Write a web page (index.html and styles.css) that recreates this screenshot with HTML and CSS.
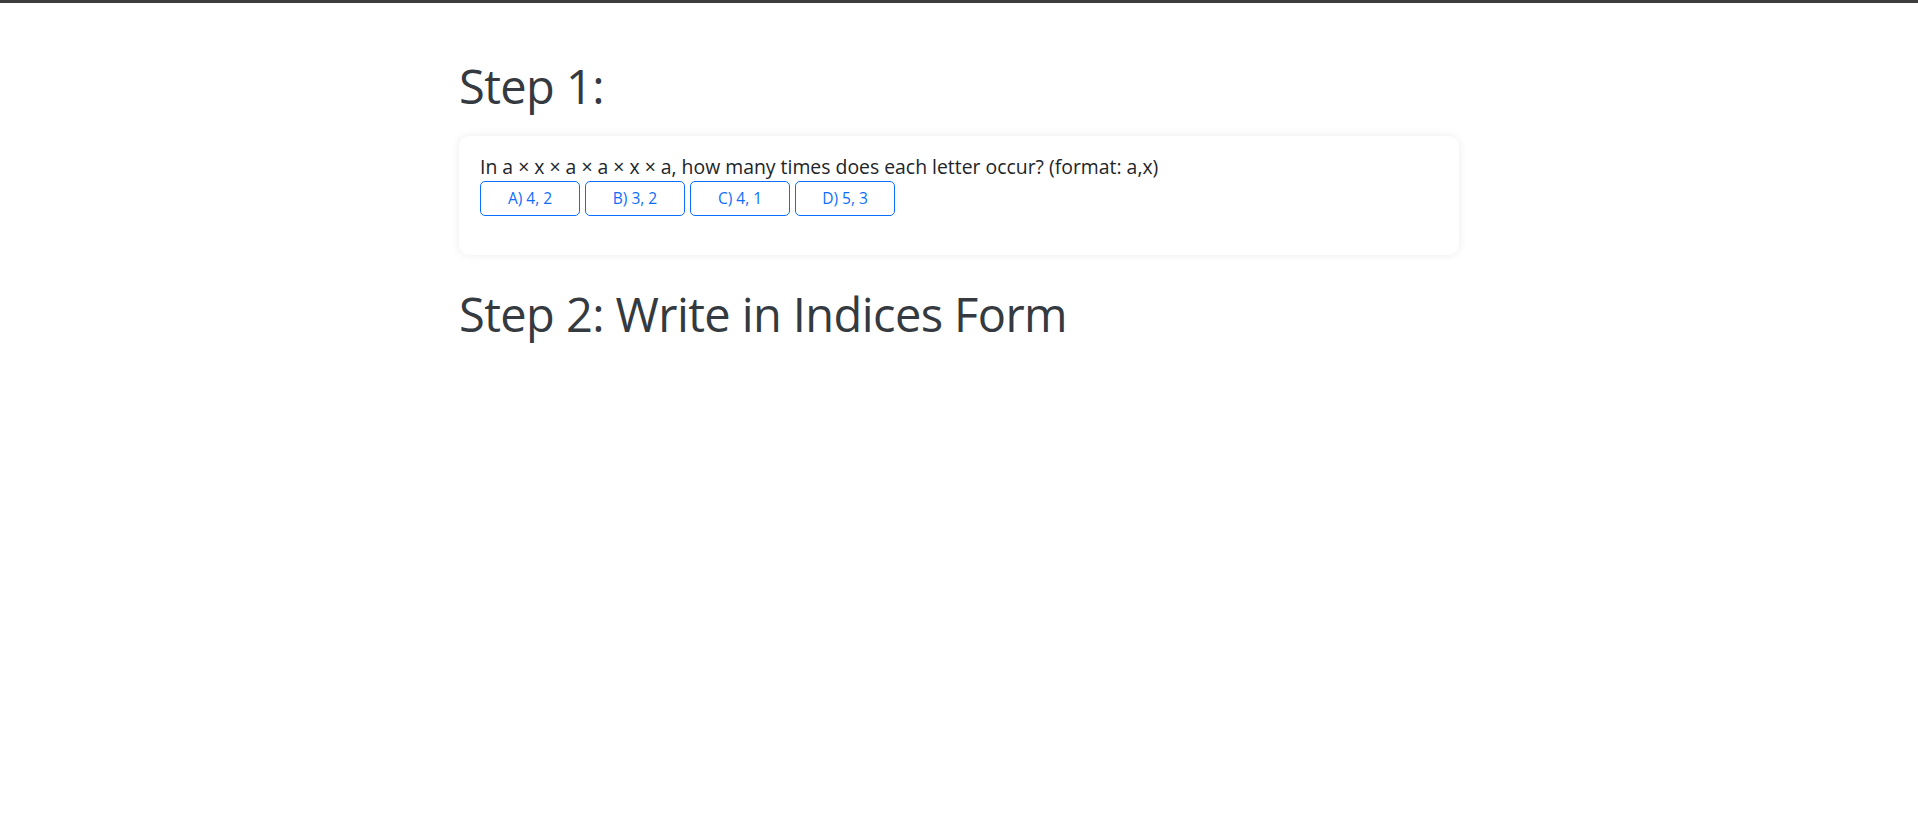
FILE: index.html
```html
<!DOCTYPE html>
<html lang="en">
<head>
<meta charset="utf-8">
<title>Indices</title>
<link rel="stylesheet" href="styles.css">
</head>
<body>
<main class="container">
  <h1 class="step-title">Step 1:</h1>
  <section class="card">
    <p class="question">In a × x × a × a × x × a, how many times does each letter occur? (format: a,x)</p>
    <div class="options">
      <button class="option">A) 4, 2</button>
      <button class="option">B) 3, 2</button>
      <button class="option">C) 4, 1</button>
      <button class="option">D) 5, 3</button>
    </div>
  </section>
  <h1 class="step-title step-two">Step 2: Write in Indices Form</h1>
</main>
</body>
</html>
```

FILE: styles.css
```css
html, body {
  margin: 0;
  padding: 0;
  background: #ffffff;
}

body {
  border-top: 3px solid #3d3d3d;
  font-family: "Open Sans", "Noto Sans", sans-serif;
  color: #212529;
  min-height: 814px;
}

.container {
  width: 1000px;
  margin: 0 auto;
  padding-top: 55px;
}

.step-title {
  margin: 0;
  font-size: 47px;
  font-weight: 400;
  letter-spacing: -0.6px;
  line-height: 57.6px;
  color: #343a40;
}

.card {
  margin-top: 20px;
  background: #ffffff;
  border-radius: 10px;
  box-shadow: 0 0 10px rgba(0, 0, 0, 0.08);
  padding: 18px 20px 39px 21px;
}

.question {
  margin: 0 0 2px 0;
  font-size: 19.4px;
  line-height: 25px;
  color: #212529;
}

.options {
  display: flex;
  gap: 5px;
}

.option {
  width: 100px;
  height: 35px;
  padding: 0;
  background: #ffffff;
  border: 1px solid #0d6efd;
  border-radius: 5px;
  color: #0d6efd;
  font-family: inherit;
  font-size: 15.5px;
  cursor: pointer;
}

.step-two {
  margin-top: 31px;
}
```
